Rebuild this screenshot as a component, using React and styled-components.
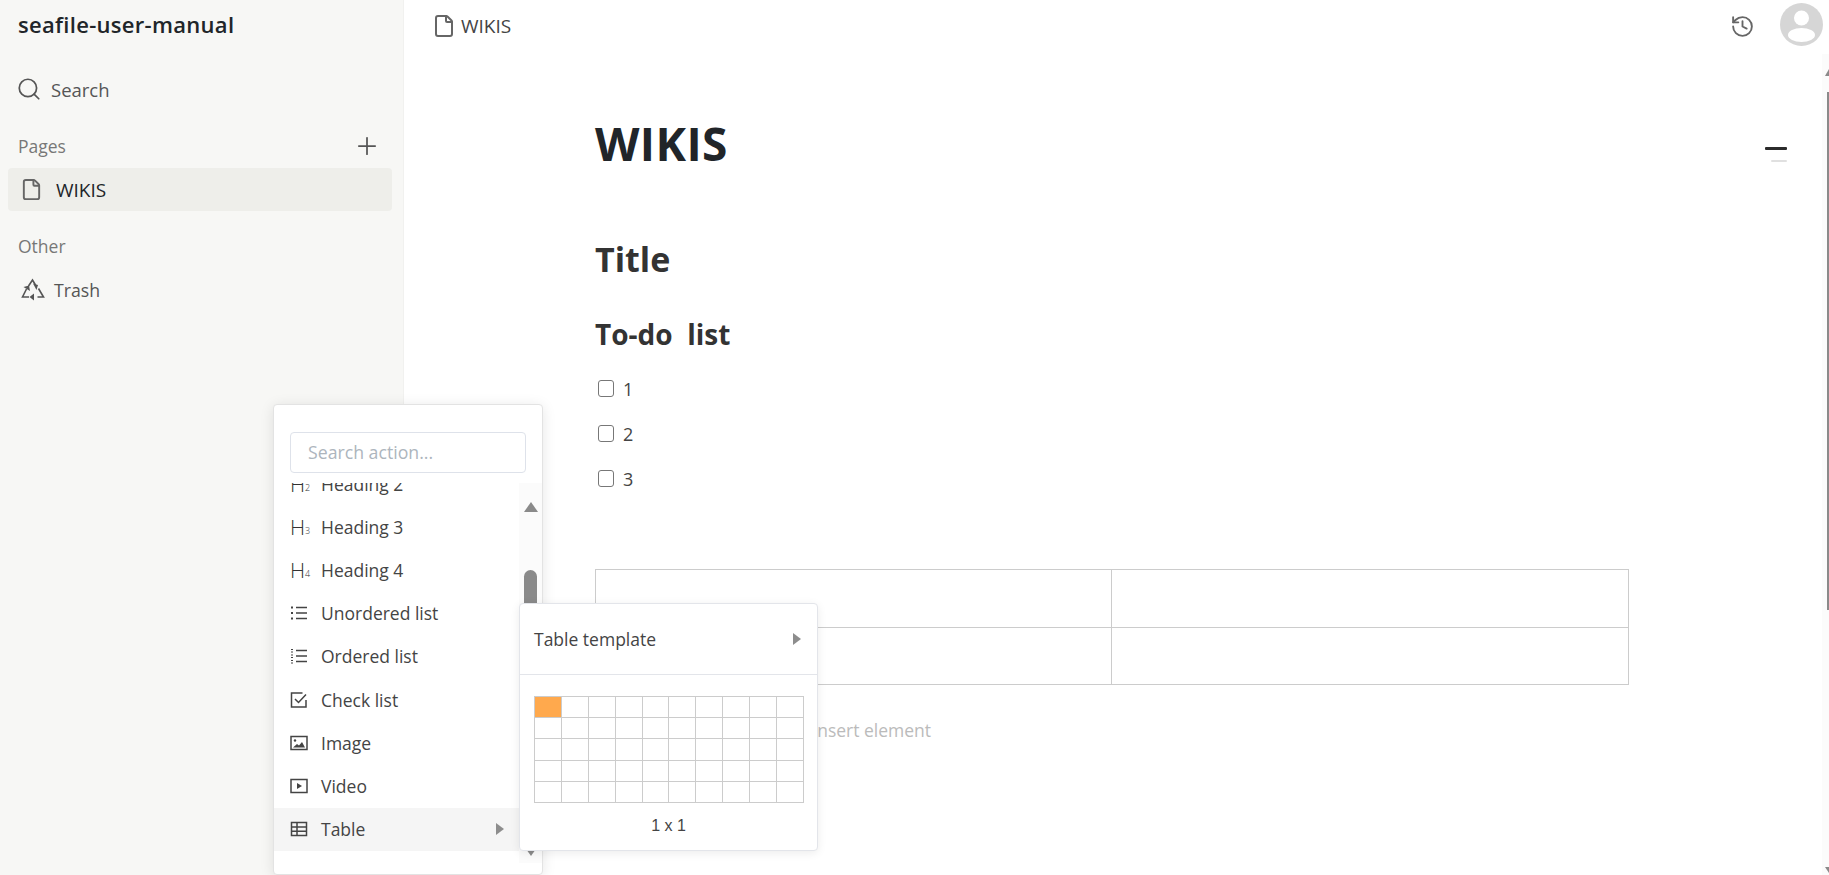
import React from "react"
import styled, { createGlobalStyle } from "styled-components"
import { File, History, Plus, Search } from "lucide-react"

/**
 * STYLES
 */
const GlobalStyle = createGlobalStyle`
  html, body {
    margin: 0;
    height: 100%;
    overflow: hidden;
    background: #fff;
    font-family: "Open Sans", "Noto Sans", "Liberation Sans", sans-serif;
    color: #333;
  }
`

const Page = styled.div`
  position: relative;
  display: flex;
  width: 1829px;
  height: 875px;
  overflow: hidden;
`

const Sidebar = styled.aside`
  flex: 0 0 404px;
  box-sizing: border-box;
  padding: 0 11px 0 8px;
  background: #f7f7f5;
  border-right: 1px solid #f1f1ef;
`

const RepoName = styled.div`
  height: 52px;
  padding-left: 10px;
  font-size: 22px;
  line-height: 49px;
  font-weight: 600;
  letter-spacing: 0.3px;
  color: #212529;
`

const SearchRow = styled.div`
  display: flex;
  align-items: center;
  gap: 9px;
  height: 40px;
  margin: 17px 0 19px;
  padding-left: 8px;
  font-size: 18.5px;
  color: #555;
`

const SectionRow = styled.div`
  display: flex;
  align-items: center;
  justify-content: space-between;
  height: 36px;
  margin-bottom: 4px;
  padding: 0 11px 0 10px;
  font-size: 17.5px;
  color: #777;
`

const PageRow = styled.div`
  display: flex;
  align-items: center;
  gap: ${(p) => (p.$active ? 13 : 9)}px;
  height: 43px;
  padding-left: ${(p) => (p.$active ? 12 : 13)}px;
  border-radius: 4px;
  background: ${(p) => (p.$active ? "#eeeeea" : "transparent")};
  font-size: ${(p) => (p.$active ? 19 : 17.7)}px;
  color: ${(p) => (p.$active ? "#212529" : "#555")};
`

const OtherRow = styled(SectionRow)`
  margin-top: 17px;
`

const Main = styled.main`
  flex: 1;
  display: flex;
  min-width: 0;
`

const MainColumn = styled.div`
  flex: 1;
  min-width: 0;
`

const Header = styled.header`
  display: flex;
  align-items: center;
  justify-content: space-between;
  height: 52px;
  padding-left: 28px;
`

const Crumb = styled.div`
  display: flex;
  align-items: center;
  gap: 5px;
  font-size: 19px;
  color: #444;
`

const HeaderTools = styled.div`
  display: flex;
  align-items: center;
  gap: 25px;
  margin-right: -1px;
`

const Avatar = styled.svg`
  display: block;
  width: 43px;
  height: 43px;
  margin-top: -3px;
`

const Content = styled.div`
  display: flex;
`

const Article = styled.article`
  flex: 0 0 1034px;
  margin-left: 191px;
`

const PageTitle = styled.h1`
  margin: 61px 0 0;
  font-size: 46px;
  line-height: 60px;
  font-weight: 700;
  letter-spacing: 0.4px;
  color: #212529;
`

const Heading = styled.h2`
  margin: 63px 0 0;
  font-size: 34px;
  line-height: 46px;
  font-weight: 700;
  color: #333;
`

const SubHeading = styled.h3`
  margin: 34px 0 0;
  font-size: 28px;
  line-height: 36px;
  font-weight: 700;
  color: #333;
`

const TodoList = styled.div`
  margin-top: 14px;
`

const Todo = styled.div`
  display: flex;
  align-items: center;
  gap: 9px;
  height: 45px;
  padding-left: 3px;
  font-size: 18px;
  color: #444;
`

const Box = styled.span`
  box-sizing: border-box;
  width: 16px;
  height: 17px;
  border: 1.5px solid #777;
  border-radius: 3px;
`

const DocTable = styled.div`
  display: grid;
  grid-template-columns: 516px 1fr;
  grid-auto-rows: 57.5px;
  margin-top: 68px;
  border-top: 1px solid #ccc;
  border-left: 1px solid #ccc;
`

const DocCell = styled.div`
  border-right: 1px solid #ccc;
  border-bottom: 1px solid #ccc;
`

const Placeholder = styled.div`
  margin-top: 33px;
  padding-left: 142px;
  font-size: 17.5px;
  line-height: 24px;
  color: #bbb;
`

const Outline = styled.div`
  display: flex;
  flex-direction: column;
  align-items: flex-end;
  gap: 10px;
  margin-left: auto;
  padding: 95px 35px 0 0;
`

const OutlineMark = styled.span`
  display: block;
  width: ${(p) => (p.$current ? 22 : 16)}px;
  height: ${(p) => (p.$current ? 3 : 2)}px;
  border-radius: 1px;
  background: ${(p) => (p.$current ? "#2b2b2b" : "#e0e0e0")};
`

const PageScroll = styled.div`
  flex: 0 0 7px;
  margin-top: 54px;
  background: #fbfbfb;
  display: flex;
  flex-direction: column;
  align-items: flex-end;
`

const PageScrollUp = styled.span`
  width: 0;
  height: 0;
  margin: 15px 0 0;
  border-left: 4px solid transparent;
  border-bottom: 7px solid #8a8a8a;
`

const PageScrollThumb = styled.span`
  width: 2px;
  height: 518px;
  margin-top: 16px;
  background: #8a8a8a;
`

const PageScrollDown = styled.span`
  width: 0;
  height: 0;
  margin-top: 257px;
  border-left: 4px solid transparent;
  border-top: 6px solid #8a8a8a;
`

const Popover = styled.div`
  position: absolute;
  left: 273px;
  top: 404px;
  box-sizing: border-box;
  width: 270px;
  height: 471px;
  display: flex;
  flex-direction: column;
  background: #fff;
  border: 1px solid #e3e3e3;
  border-radius: 4px;
  box-shadow: 0 2px 14px rgba(0, 0, 0, 0.1);
`

const SearchBox = styled.div`
  box-sizing: border-box;
  flex: none;
  height: 41px;
  margin: 27px 16px 10px 16px;
  padding-left: 17px;
  border: 1px solid #dee2ea;
  border-radius: 4px;
  font-size: 17.7px;
  line-height: 38px;
  color: #adb5bd;
`

const ListArea = styled.div`
  display: flex;
  height: 380px;
  overflow: hidden;
`

const ActionList = styled.div`
  flex: 1;
  min-width: 0;
  margin-top: -21px;
`

const ActionRow = styled.div`
  display: flex;
  align-items: center;
  height: 43.2px;
  padding: 0 15px 0 16px;
  background: ${(p) => (p.$active ? "#f5f5f5" : "transparent")};
  font-size: 17.5px;
  color: #444;
`

const ActionIcon = styled.span`
  display: flex;
  align-items: center;
  flex: 0 0 31px;
  height: 20px;
  font-size: 21px;
  font-weight: 300;
  color: #333;

  sub {
    font-size: 9px;
    line-height: 0;
    margin-top: 8px;
  }
`

const ActionLabel = styled.span`
  flex: 1;
`

const Caret = styled.span`
  width: 0;
  height: 0;
  border-top: 6px solid transparent;
  border-bottom: 6px solid transparent;
  border-left: 8px solid #8d8d8d;
`

const ListScroll = styled.div`
  flex: 0 0 23px;
  display: flex;
  flex-direction: column;
  align-items: center;
  background: #fbfbfb;
`

const ScrollUp = styled.span`
  width: 0;
  height: 0;
  margin-top: 19px;
  border-left: 7px solid transparent;
  border-right: 7px solid transparent;
  border-bottom: 10px solid #8a8a8a;
`

const ScrollThumb = styled.span`
  flex: none;
  width: 13px;
  height: 120px;
  margin-top: 58px;
  border-radius: 7px;
  background: #8a8a8a;
`

const ScrollDown = styled.span`
  width: 0;
  height: 0;
  margin-top: 156px;
  border-left: 7px solid transparent;
  border-right: 7px solid transparent;
  border-top: 10px solid #8a8a8a;
`

const SubMenu = styled.div`
  position: absolute;
  left: 519px;
  top: 603px;
  box-sizing: border-box;
  width: 299px;
  height: 248px;
  background: #fff;
  border: 1px solid #e3e5ea;
  border-radius: 4px;
  box-shadow: 0 2px 10px rgba(0, 0, 0, 0.08);
`

const TemplateRow = styled.div`
  display: flex;
  align-items: center;
  justify-content: space-between;
  height: 70px;
  padding: 0 16px 0 14px;
  border-bottom: 1px solid #e3e5ea;
  font-size: 17.5px;
  color: #444;
`

const Grid = styled.div`
  display: grid;
  grid-template-columns: repeat(10, 1fr);
  grid-auto-rows: 21.2px;
  width: 270px;
  margin: 21px 0 0 14px;
  border-top: 1px solid #ccc;
  border-left: 1px solid #ccc;
  box-sizing: border-box;
`

const GridCell = styled.span`
  border-right: 1px solid #ccc;
  border-bottom: 1px solid #ccc;
  background: ${(p) => (p.$on ? "#ffa94d" : "#fff")};
`

const GridSize = styled.div`
  margin-top: 14px;
  text-align: center;
  font-family: "Liberation Sans", sans-serif;
  font-size: 16px;
  color: #444;
`

/**
 * CODE
 */
const lineProps = {
  width: 18,
  height: 18,
  viewBox: "0 0 18 18",
  fill: "none",
  stroke: "#444",
  strokeWidth: 1.5,
}

const BulletIcon = () => (
  <svg {...lineProps}>
    <path d="M6 3.5h11M6 9h11M6 14.5h11" />
    <path d="M1 3.5h2M1 9h2M1 14.5h2" strokeWidth="2" />
  </svg>
)

const NumberIcon = () => (
  <svg {...lineProps}>
    <path d="M6 3.5h11M6 9h11M6 14.5h11" />
    <path d="M1 2.5h2M1 5h2M1 8h2M1 10.5h2M1 13.5h2M1 16h2" strokeWidth="1" />
  </svg>
)

const CheckIcon = () => (
  <svg {...lineProps}>
    <path d="M16 9v7H1.5V2h11" />
    <path d="M5 8l3.5 3.5L16 3.5" />
  </svg>
)

const ImageIcon = () => (
  <svg {...lineProps}>
    <rect x="1" y="2.5" width="16" height="13" />
    <circle cx="5" cy="6.5" r="1.2" fill="#444" stroke="none" />
    <path d="M3 13.5l4-3.5 2 1.5 3-3.5 3 5.5z" fill="#444" stroke="none" />
  </svg>
)

const VideoIcon = () => (
  <svg {...lineProps}>
    <rect x="1" y="2.5" width="16" height="13" />
    <path d="M7 6l5 3-5 3z" fill="#444" stroke="none" />
  </svg>
)

const TableIcon = () => (
  <svg {...lineProps}>
    <rect x="1.5" y="2.5" width="15" height="13" />
    <path d="M1.5 7h15M1.5 11.2h15M7 2.5v13" />
  </svg>
)

const TrashIcon = () => (
  <svg width="24" height="23" viewBox="0 0 24 23" fill="none" stroke="#555" strokeWidth="1.6">
    <path d="M7.5 8L11.5 2l3 5" />
    <path d="M17.5 10.5l5 8.5h-6" />
    <path d="M5.5 11L1.5 19H8" />
    <path d="M12 5.5l5 1.5-1.5 5z" fill="#555" stroke="none" />
    <path d="M13 15.5v7L8.5 19z" fill="#555" stroke="none" />
    <path d="M2.5 9l5.5-1.5L9 13z" fill="#555" stroke="none" />
  </svg>
)

const actions = [
  { label: "Heading 2", icon: <>H<sub>2</sub></> },
  { label: "Heading 3", icon: <>H<sub>3</sub></> },
  { label: "Heading 4", icon: <>H<sub>4</sub></> },
  { label: "Unordered list", icon: <BulletIcon /> },
  { label: "Ordered list", icon: <NumberIcon /> },
  { label: "Check list", icon: <CheckIcon /> },
  { label: "Image", icon: <ImageIcon /> },
  { label: "Video", icon: <VideoIcon /> },
  { label: "Table", icon: <TableIcon />, active: true },
]

const App = () => (
  <Page>
    <GlobalStyle />
    <Sidebar>
      <RepoName>seafile-user-manual</RepoName>
      <SearchRow>
        <Search size={26} strokeWidth={1.6} />
        Search
      </SearchRow>
      <SectionRow>
        Pages
        <Plus size={28} strokeWidth={1.5} color="#555" />
      </SectionRow>
      <PageRow $active>
        <File size={23} strokeWidth={2} color="#666" />
        WIKIS
      </PageRow>
      <OtherRow>Other</OtherRow>
      <PageRow>
        <TrashIcon />
        Trash
      </PageRow>
    </Sidebar>

    <Main>
      <MainColumn>
        <Header>
          <Crumb>
            <File size={24} strokeWidth={2} color="#666" />
            WIKIS
          </Crumb>
          <HeaderTools>
            <History size={25} strokeWidth={1.8} color="#666" />
            <Avatar viewBox="0 0 43 43">
              <circle cx="21.5" cy="21.5" r="21.5" fill="#d6d6d6" />
              <circle cx="21.5" cy="15" r="7.5" fill="#fff" />
              <ellipse cx="21.5" cy="32" rx="13.5" ry="7" fill="#fff" />
            </Avatar>
          </HeaderTools>
        </Header>
        <Content>
          <Article>
            <PageTitle>WIKIS</PageTitle>
            <Heading>Title</Heading>
            <SubHeading>To-do&nbsp; list</SubHeading>
            <TodoList>
              {[1, 2, 3].map((n) => (
                <Todo key={n}>
                  <Box />
                  {n}
                </Todo>
              ))}
            </TodoList>
            <DocTable>
              <DocCell />
              <DocCell />
              <DocCell />
              <DocCell />
            </DocTable>
            <Placeholder>Type / to insert element</Placeholder>
          </Article>
          <Outline>
            <OutlineMark $current />
            <OutlineMark />
          </Outline>
        </Content>
      </MainColumn>
      <PageScroll>
        <PageScrollUp />
        <PageScrollThumb />
        <PageScrollDown />
      </PageScroll>
    </Main>

    <Popover>
      <SearchBox>Search action...</SearchBox>
      <ListArea>
        <ActionList>
          {actions.map((a) => (
            <ActionRow key={a.label} $active={a.active}>
              <ActionIcon>{a.icon}</ActionIcon>
              <ActionLabel>{a.label}</ActionLabel>
              {a.active && <Caret />}
            </ActionRow>
          ))}
        </ActionList>
        <ListScroll>
          <ScrollUp />
          <ScrollThumb />
          <ScrollDown />
        </ListScroll>
      </ListArea>
    </Popover>

    <SubMenu>
      <TemplateRow>
        Table template
        <Caret />
      </TemplateRow>
      <Grid>
        {Array.from({ length: 50 }, (_, i) => (
          <GridCell key={i} $on={i === 0} />
        ))}
      </Grid>
      <GridSize>1 x 1</GridSize>
    </SubMenu>
  </Page>
)

export default App
